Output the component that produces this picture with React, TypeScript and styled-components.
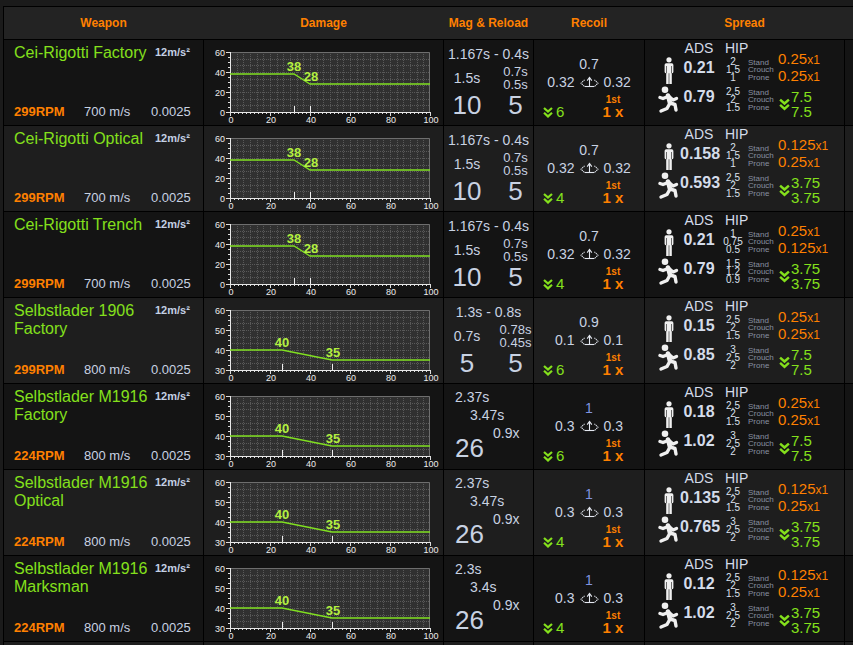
import React from "react";
import styled, { createGlobalStyle } from "styled-components";

const GlobalStyle = createGlobalStyle`
  html, body {
    margin: 0;
    padding: 0;
    background: #1b1b1b;
    overflow: hidden;
  }
  body {
    font-family: "Liberation Sans", Arial, sans-serif;
    color: #c8d2e2;
  }
`;

const COLS = "199px 239px 89px 110px 199px 40px";
const ORANGE = "#ff8000";
const GREEN = "#84e01c";
const LIGHT = "#c8d2e2";

type Mag =
  | { kind: "split"; top: string; left: string; right: [string, string]; big: [string, string] }
  | { kind: "stair"; lines: [string, string, string]; big: string };

type Weapon = {
  name: string;
  rpm: string;
  speed: string;
  drag: string;
  dmg: { min: number; start: number; end: number; from: number; to: number };
  mag: Mag;
  recoil: { up: string; side: string; blue?: boolean; first: string };
  spread: {
    ads: string;
    standNums: string[];
    hip: [string, string];
    runAds: string;
    runNums: string[];
    move: string;
  };
};

const cei = (name: string, first: string, spread: Weapon["spread"]): Weapon => ({
  name,
  rpm: "299RPM",
  speed: "700 m/s",
  drag: "0.0025",
  dmg: { min: 0, start: 38, end: 28, from: 32, to: 40 },
  mag: { kind: "split", top: "1.167s - 0.4s", left: "1.5s", right: ["0.7s", "0.5s"], big: ["10", "5"] },
  recoil: { up: "0.7", side: "0.32", first },
  spread,
});

const m1916 = (name: string, first: string, lines: [string, string, string], spread: Weapon["spread"]): Weapon => ({
  name,
  rpm: "224RPM",
  speed: "800 m/s",
  drag: "0.0025",
  dmg: { min: 30, start: 40, end: 35, from: 26, to: 51 },
  mag: { kind: "stair", lines, big: "26" },
  recoil: { up: "1", side: "0.3", blue: true, first },
  spread,
});

const weapons: Weapon[] = [
  cei("Cei-Rigotti Factory", "6", {
    ads: "0.21", standNums: ["2", "1.5", "1"], hip: ["0.25x1", "0.25x1"],
    runAds: "0.79", runNums: ["2.5", "2", "1.5"], move: "7.5",
  }),
  cei("Cei-Rigotti Optical", "4", {
    ads: "0.158", standNums: ["2", "1.5", "1"], hip: ["0.125x1", "0.25x1"],
    runAds: "0.593", runNums: ["2.5", "2", "1.5"], move: "3.75",
  }),
  cei("Cei-Rigotti Trench", "4", {
    ads: "0.21", standNums: ["1", "0.75", "0.5"], hip: ["0.25x1", "0.125x1"],
    runAds: "0.79", runNums: ["1.5", "1.2", "0.9"], move: "3.75",
  }),
  {
    name: "Selbstlader 1906 Factory",
    rpm: "299RPM",
    speed: "800 m/s",
    drag: "0.0025",
    dmg: { min: 30, start: 40, end: 35, from: 26, to: 51 },
    mag: { kind: "split", top: "1.3s - 0.8s", left: "0.7s", right: ["0.78s", "0.45s"], big: ["5", "5"] },
    recoil: { up: "0.9", side: "0.1", first: "6" },
    spread: {
      ads: "0.15", standNums: ["2.5", "2", "1.5"], hip: ["0.25x1", "0.25x1"],
      runAds: "0.85", runNums: ["3", "2.5", "2"], move: "7.5",
    },
  },
  m1916("Selbstlader M1916 Factory", "6", ["2.37s", "3.47s", "0.9x"], {
    ads: "0.18", standNums: ["2.5", "2", "1.5"], hip: ["0.25x1", "0.25x1"],
    runAds: "1.02", runNums: ["3", "2.5", "2"], move: "7.5",
  }),
  m1916("Selbstlader M1916 Optical", "4", ["2.37s", "3.47s", "0.9x"], {
    ads: "0.135", standNums: ["2.5", "2", "1.5"], hip: ["0.125x1", "0.25x1"],
    runAds: "0.765", runNums: ["3", "2.5", "2"], move: "3.75",
  }),
  m1916("Selbstlader M1916 Marksman", "4", ["2.3s", "3.4s", "0.9x"], {
    ads: "0.12", standNums: ["2.5", "2", "1.5"], hip: ["0.125x1", "0.25x1"],
    runAds: "1.02", runNums: ["3", "2.5", "2"], move: "3.75",
  }),
];

// layout
const Page = styled.div`
  padding: 6px 0 0 3px;
`;

const Table = styled.div`
  display: flex;
  flex-direction: column;
  gap: 1px;
  width: 880px;
  background: #000;
  border-top: 1px solid #000;
  border-left: 1px solid #000;
`;

const HeaderRow = styled.div`
  display: grid;
  grid-template-columns: ${COLS};
  column-gap: 1px;
  height: 32px;
  background: #232323;
`;

const HeadCell = styled.div`
  display: flex;
  align-items: center;
  justify-content: center;
  color: ${ORANGE};
  font-size: 12px;
  font-weight: bold;
`;

const Row = styled.div`
  display: grid;
  grid-template-columns: ${COLS};
  column-gap: 1px;
  height: 85px;
`;

const Cell = styled.div<{ $alt: boolean }>`
  background: ${(p) => (p.$alt ? "#1e1e1e" : "#141414")};
  overflow: hidden;
  min-width: 0;
`;

// weapon column
const WeaponCell = styled(Cell)`
  display: grid;
  grid-template-columns: 141px 1fr;
  grid-template-rows: 1fr auto;
  padding: 4px 0 6px 10px;
`;

const Name = styled.div`
  font-size: 16px;
  line-height: 18px;
  color: ${GREEN};
`;

const Accel = styled.div`
  font-size: 11px;
  line-height: 13px;
  font-weight: bold;
  color: #c4d0e4;
  padding-top: 2px;
`;

const Stats = styled.div`
  grid-column: 1 / -1;
  display: grid;
  grid-template-columns: 70px 67px 1fr;
  align-items: baseline;
  line-height: 15px;
  font-size: 13px;
  color: ${LIGHT};
`;

const Rpm = styled.span`
  font-weight: bold;
  color: ${ORANGE};
`;

// damage column
const ChartSvg = styled.svg`
  display: block;
`;

const AxisText = styled.text`
  font-family: "Liberation Sans", Arial, sans-serif;
  font-size: 9px;
  fill: #ececec;
`;

const ValueText = styled.text`
  font-family: "Liberation Sans", Arial, sans-serif;
  font-size: 13px;
  font-weight: bold;
  fill: #b4f040;
`;

function DamageChart({ dmg }: { dmg: Weapon["dmg"] }) {
  const x0 = 26;
  const x1 = 226;
  const y0 = 12;
  const y1 = 72;
  const sx = (v: number) => x0 + v * 2;
  const sy = (v: number) => y1 - ((v - dmg.min) * 60) / (60 - dmg.min);
  const step = (60 - dmg.min) / 3;
  const yLabels = [0, 1, 2, 3].map((i) => dmg.min + i * step);
  const vGrid = Array.from({ length: 29 }, (_, i) => x0 + ((i + 1) * 200) / 30);
  const hGrid = Array.from({ length: 8 }, (_, i) => y0 + ((i + 1) * 60) / 9);
  const xTicks = Array.from({ length: 51 }, (_, i) => x0 + i * 4);
  const yTicks = Array.from({ length: 13 }, (_, i) => y0 + i * 5);
  const line = [
    [x0, sy(dmg.start)],
    [sx(dmg.from), sy(dmg.start)],
    [sx(dmg.to), sy(dmg.end)],
    [x1, sy(dmg.end)],
  ]
    .map((p) => p.join(","))
    .join(" ");

  return (
    <ChartSvg width="239" height="85" viewBox="0 0 239 85">
      <rect x={x0} y={y0} width={200} height={60} fill="#303030" />
      {vGrid.map((x) => (
        <line key={"v" + x} x1={Math.round(x) + 0.5} x2={Math.round(x) + 0.5} y1={y0} y2={y1} stroke="#595959" strokeDasharray="1 1" />
      ))}
      {hGrid.map((y) => (
        <line key={"h" + y} x1={x0} x2={x1} y1={Math.round(y) + 0.5} y2={Math.round(y) + 0.5} stroke="#595959" strokeDasharray="1 1" />
      ))}
      <polyline points={`${x0},${y0 + 0.5} ${x1 - 0.5},${y0 + 0.5} ${x1 - 0.5},${y1}`} fill="none" stroke="#6e6e6e" />
      {xTicks.map((x, i) => (
        <line key={"xt" + i} x1={x + 0.5} x2={x + 0.5} y1={y1} y2={y1 + (i % 10 === 0 ? 4 : 2)} stroke="#ddd" />
      ))}
      {yTicks.map((y, i) => (
        <line key={"yt" + i} x1={x0 - (i % 4 === 0 ? 4 : 2)} x2={x0} y1={y + 0.5} y2={y + 0.5} stroke="#ddd" />
      ))}
      <line x1={x0 + 0.5} x2={x0 + 0.5} y1={y0} y2={y1 + 1} stroke="#e8e8e8" />
      <line x1={x0} x2={x1} y1={y1 + 0.5} y2={y1 + 0.5} stroke="#e8e8e8" />
      {[dmg.from, dmg.to].map((v) => (
        <line key={"m" + v} x1={sx(v) + 0.5} x2={sx(v) + 0.5} y1={y1 - 6} y2={y1} stroke="#eee" />
      ))}
      <polyline points={line} fill="none" stroke="#80e020" strokeWidth="1.3" />
      {yLabels.map((v) => (
        <AxisText key={"yl" + v} x={21} y={sy(v) + 3.5} textAnchor="end">
          {v}
        </AxisText>
      ))}
      {[0, 20, 40, 60, 80, 100].map((v) => (
        <AxisText key={"xl" + v} x={sx(v) + 1} y={83} textAnchor="middle">
          {v}
        </AxisText>
      ))}
      <ValueText x={sx(dmg.from)} y={sy(dmg.start) - 3} textAnchor="middle">
        {dmg.start}
      </ValueText>
      <ValueText x={sx(dmg.to) + 1} y={sy(dmg.end) - 3} textAnchor="middle">
        {dmg.end}
      </ValueText>
    </ChartSvg>
  );
}

// mag & reload column
const MagCell = styled(Cell)`
  display: flex;
  flex-direction: column;
  color: ${LIGHT};
`;

const MagTop = styled.div`
  text-align: center;
  font-size: 14px;
  line-height: 16px;
  padding-top: 6px;
`;

const MagGrid = styled.div`
  display: grid;
  grid-template-columns: 46px 1fr;
  row-gap: 1px;
  margin-top: 3px;
`;

const ReloadLeft = styled.div`
  align-self: center;
  text-align: center;
  font-size: 14px;
  line-height: 16px;
`;

const ReloadRight = styled.div`
  padding-left: 8px;
  text-align: center;
  font-size: 13px;
  line-height: 13px;
`;

const Big = styled.div<{ $indent?: number }>`
  font-size: 26px;
  line-height: 26px;
  text-align: ${(p) => (p.$indent === undefined ? "center" : "left")};
  padding-left: ${(p) => p.$indent ?? 0}px;
`;

const BigRight = styled(Big)`
  padding-left: 8px;
`;

const Stair = styled.div`
  padding-top: 4px;
`;

const StairLine = styled.div<{ $indent: number }>`
  padding-left: ${(p) => p.$indent}px;
  font-size: 14px;
  line-height: 18px;
`;

const StairBig = styled(Big)`
  margin-top: -7px;
`;

function MagReload({ mag, alt }: { mag: Mag; alt: boolean }) {
  if (mag.kind === "split") {
    return (
      <MagCell $alt={alt}>
        <MagTop>{mag.top}</MagTop>
        <MagGrid>
          <ReloadLeft>{mag.left}</ReloadLeft>
          <ReloadRight>
            <div>{mag.right[0]}</div>
            <div>{mag.right[1]}</div>
          </ReloadRight>
          <Big>{mag.big[0]}</Big>
          <BigRight>{mag.big[1]}</BigRight>
        </MagGrid>
      </MagCell>
    );
  }
  return (
    <MagCell $alt={alt}>
      <Stair>
        <StairLine $indent={11}>{mag.lines[0]}</StairLine>
        <StairLine $indent={26}>{mag.lines[1]}</StairLine>
        <StairLine $indent={49}>{mag.lines[2]}</StairLine>
        <StairBig $indent={11}>{mag.big}</StairBig>
      </Stair>
    </MagCell>
  );
}

// recoil column
const RecoilCell = styled(Cell)`
  display: flex;
  flex-direction: column;
  padding-top: 16px;
  font-size: 14px;
  line-height: 16px;
  color: ${LIGHT};
`;

const RecoilUp = styled.div<{ $blue?: boolean }>`
  text-align: center;
  color: ${(p) => (p.$blue ? "#8094e0" : LIGHT)};
`;

const RecoilMid = styled.div`
  display: flex;
  justify-content: center;
  align-items: center;
  gap: 5px;
  margin-top: 2px;
`;

const RecoilBottom = styled.div`
  display: grid;
  grid-template-columns: 48px 1fr;
  align-items: end;
  margin-top: 4px;
`;

const FirstShot = styled.div`
  display: flex;
  align-items: center;
  gap: 3px;
  padding-left: 9px;
  font-size: 15px;
  line-height: 14px;
  color: ${GREEN};
`;

const FirstMult = styled.div`
  text-align: center;
  color: ${ORANGE};
`;

const FirstLabel = styled.div`
  font-size: 10px;
  line-height: 11px;
  font-weight: bold;
`;

const FirstValue = styled.div`
  font-size: 15px;
  line-height: 14px;
  font-weight: bold;
`;

function RecoilIcon() {
  return (
    <svg width="19" height="13" viewBox="0 0 19 13" fill="none" stroke="#e4e8f0" strokeWidth="1.1">
      <path d="M7.2 4.6 L9.5 1.4 L11.8 4.6" />
      <path d="M9.5 2 V10.5" />
      <path d="M4.5 10.5 H14.5" />
      <path d="M4.6 3.8 L1 7.2 L4.6 10.6" strokeDasharray="1.3 0.7" />
      <path d="M14.4 3.8 L18 7.2 L14.4 10.6" strokeDasharray="1.3 0.7" />
    </svg>
  );
}

function DoubleChevron({ w = 10, h = 11 }: { w?: number; h?: number }) {
  return (
    <svg width={w} height={h} viewBox="0 0 10 11" fill="none" stroke="#84e01c" strokeWidth="2.2">
      <path d="M1 1 L5 4.6 L9 1" />
      <path d="M1 5.8 L5 9.4 L9 5.8" />
    </svg>
  );
}

// spread column
const SpreadCell = styled(Cell)`
  display: grid;
  grid-template-columns: 22px 38px 30px 30px 1fr;
  grid-template-rows: 14px 30px 30px;
  align-items: center;
  padding: 1px 0 0 13px;
`;

const SpreadHead = styled.div<{ $start: number }>`
  grid-column: ${(p) => p.$start} / span ${(p) => (p.$start === 2 ? 1 : 2)};
  text-align: ${(p) => (p.$start === 2 ? "center" : "left")};
  padding-left: ${(p) => (p.$start === 2 ? 0 : 7)}px;
  font-size: 14px;
  line-height: 14px;
  color: #d4dcea;
`;

const IconBox = styled.div`
  display: flex;
  justify-content: center;
  align-items: center;
`;

const AdsValue = styled.div<{ $lift: number }>`
  text-align: center;
  font-size: 16px;
  line-height: 18px;
  font-weight: bold;
  white-space: nowrap;
  color: #d4dcea;
  margin-bottom: ${(p) => p.$lift}px;
`;

const Nums = styled.div`
  text-align: center;
  font-size: 10px;
  line-height: 8px;
  color: #dce2ee;
`;

const Stances = styled.div`
  font-size: 8px;
  line-height: 7.5px;
  color: #8890a0;
`;

const HipStack = styled.div`
  align-self: start;
  margin-top: -4px;
  font-size: 15px;
  line-height: 16px;
  color: ${ORANGE};
  white-space: nowrap;
`;

const Mult = styled.span`
  font-size: 12px;
`;

const MoveBox = styled.div`
  align-self: start;
  display: flex;
  align-items: center;
  gap: 1px;
  margin-top: 4px;
  margin-left: 1px;
`;

const MoveStack = styled.div`
  font-size: 15px;
  line-height: 15px;
  color: ${GREEN};
`;

function StandIcon() {
  return (
    <svg width="10" height="27" viewBox="0 0 10 27" fill="#f0f0f0">
      <circle cx="5" cy="2.8" r="2.6" />
      <rect x="0.6" y="6.3" width="8.8" height="10" rx="1.6" />
      <rect x="2.2" y="15" width="2.5" height="12" />
      <rect x="5.3" y="15" width="2.5" height="12" />
      <rect x="2.1" y="9" width="0.6" height="7.3" fill="#141414" />
      <rect x="7.3" y="9" width="0.6" height="7.3" fill="#141414" />
    </svg>
  );
}

function RunIcon() {
  return (
    <svg width="22" height="28" viewBox="0 0 22 28" fill="none" stroke="#f0f0f0" strokeWidth="3.4" strokeLinecap="round" strokeLinejoin="round">
      <circle cx="7" cy="3.8" r="3.3" fill="#f0f0f0" stroke="none" />
      <path d="M10 9.5 L12 17" strokeWidth="4.6" />
      <path d="M10 10.5 L5 12.5 L2 11.5" />
      <path d="M11 10.5 L15 14 L18.5 12.5" />
      <path d="M12 17 L17 18.5 L18 24" />
      <path d="M12 17 L9 22.5 L3 25" />
    </svg>
  );
}

function HipValue({ v }: { v: string }) {
  const [num, mult] = v.split("x");
  return (
    <div>
      {num}
      <Mult>x{mult}</Mult>
    </div>
  );
}

function Spread({ s, alt }: { s: Weapon["spread"]; alt: boolean }) {
  return (
    <SpreadCell $alt={alt}>
      <span />
      <SpreadHead $start={2}>ADS</SpreadHead>
      <SpreadHead $start={3}>HIP</SpreadHead>
      <span />

      <IconBox>
        <StandIcon />
      </IconBox>
      <AdsValue $lift={4}>{s.ads}</AdsValue>
      <Nums>
        {s.standNums.map((n, i) => (
          <div key={i}>{n}</div>
        ))}
      </Nums>
      <Stances>
        <div>Stand</div>
        <div>Crouch</div>
        <div>Prone</div>
      </Stances>
      <HipStack>
        <HipValue v={s.hip[0]} />
        <HipValue v={s.hip[1]} />
      </HipStack>

      <IconBox>
        <RunIcon />
      </IconBox>
      <AdsValue $lift={6}>{s.runAds}</AdsValue>
      <Nums>
        {s.runNums.map((n, i) => (
          <div key={i}>{n}</div>
        ))}
      </Nums>
      <Stances>
        <div>Stand</div>
        <div>Crouch</div>
        <div>Prone</div>
      </Stances>
      <MoveBox>
        <DoubleChevron w={11} h={13} />
        <MoveStack>
          <div>{s.move}</div>
          <div>{s.move}</div>
        </MoveStack>
      </MoveBox>
    </SpreadCell>
  );
}

function WeaponRow({ w, alt }: { w: Weapon; alt: boolean }) {
  return (
    <Row>
      <WeaponCell $alt={alt}>
        <Name>{w.name}</Name>
        <Accel>12m/s²</Accel>
        <Stats>
          <Rpm>{w.rpm}</Rpm>
          <span>{w.speed}</span>
          <span>{w.drag}</span>
        </Stats>
      </WeaponCell>
      <Cell $alt={alt}>
        <DamageChart dmg={w.dmg} />
      </Cell>
      <MagReload mag={w.mag} alt={alt} />
      <RecoilCell $alt={alt}>
        <RecoilUp $blue={w.recoil.blue}>{w.recoil.up}</RecoilUp>
        <RecoilMid>
          <span>{w.recoil.side}</span>
          <RecoilIcon />
          <span>{w.recoil.side}</span>
        </RecoilMid>
        <RecoilBottom>
          <FirstShot>
            <DoubleChevron />
            <span>{w.recoil.first}</span>
          </FirstShot>
          <FirstMult>
            <FirstLabel>1st</FirstLabel>
            <FirstValue>1 x</FirstValue>
          </FirstMult>
        </RecoilBottom>
      </RecoilCell>
      <Spread s={w.spread} alt={alt} />
      <Cell $alt={alt} />
    </Row>
  );
}

export default function App() {
  return (
    <>
      <GlobalStyle />
      <Page>
        <Table>
          <HeaderRow>
            <HeadCell>Weapon</HeadCell>
            <HeadCell>Damage</HeadCell>
            <HeadCell>Mag &amp; Reload</HeadCell>
            <HeadCell>Recoil</HeadCell>
            <HeadCell>Spread</HeadCell>
            <HeadCell />
          </HeaderRow>
          {weapons.map((w, i) => (
            <WeaponRow key={w.name} w={w} alt={i % 2 === 1} />
          ))}
          <Row>
            {[0, 1, 2, 3, 4, 5].map((i) => (
              <Cell key={i} $alt />
            ))}
          </Row>
        </Table>
      </Page>
    </>
  );
}
